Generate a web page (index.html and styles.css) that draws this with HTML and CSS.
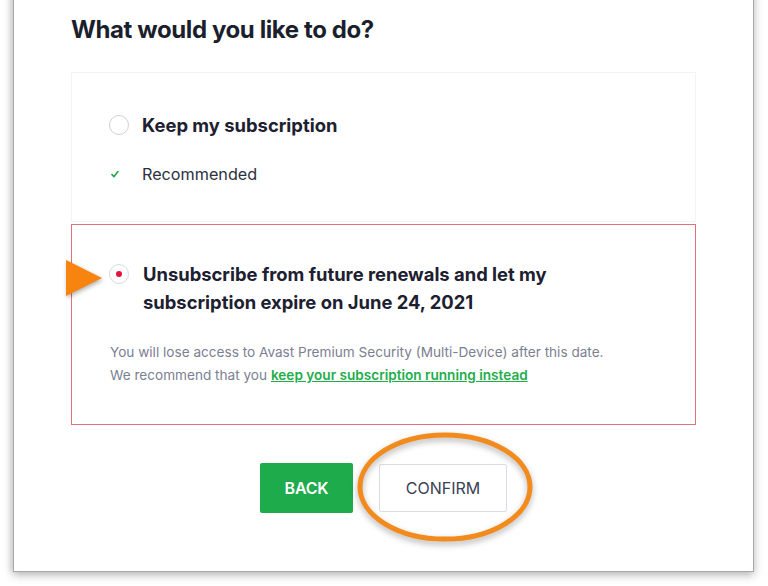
FILE: index.html
```html
<!DOCTYPE html>
<html lang="en">
<head>
<meta charset="utf-8">
<title>What would you like to do?</title>
<link rel="stylesheet" href="styles.css">
</head>
<body>
<div class="card">
  <h1 class="title">What would you like to do?</h1>

  <div class="option option-keep">
    <div class="option-row">
      <span class="radio"></span>
      <span class="option-label">Keep my subscription</span>
    </div>
    <div class="recommended">
      <svg class="check" width="8" height="8" viewBox="0 0 8 8"><path d="M1 4.6 L3 6.6 L7 1.6" fill="none" stroke="#1fa64a" stroke-width="1.6" stroke-linecap="round" stroke-linejoin="round"/></svg>
      <span>Recommended</span>
    </div>
  </div>

  <div class="option option-unsub">
    <div class="option-row top">
      <span class="radio checked"><span class="dot"></span></span>
      <span class="option-label">Unsubscribe from future renewals and let my<br>subscription expire on June 24, 2021</span>
    </div>
    <p class="note">You will lose access to Avast Premium Security (Multi-Device) after this date.<br>We recommend that you <a href="#" class="link">keep your subscription running instead</a></p>
  </div>

  <div class="actions">
    <button class="btn btn-back">BACK</button>
    <button class="btn btn-confirm">CONFIRM</button>
  </div>

  <svg class="pointer" width="40" height="40" viewBox="0 0 40 40"><polygon points="1,1 37,19 1,37" fill="#f7840f"/></svg>
  <svg class="ring" width="176" height="110" viewBox="0 0 176 110"><ellipse cx="88" cy="55" rx="85" ry="52" fill="none" stroke="#f28a1c" stroke-width="5"/></svg>
</div>
</body>
</html>
```

FILE: styles.css
```css
html, body {
  margin: 0;
  padding: 0;
  background: #ffffff;
}
body {
  font-family: "Inter", "Lato", sans-serif;
  color: #1c2030;
  width: 768px;
  height: 586px;
  overflow: hidden;
}
.card {
  position: relative;
  box-sizing: border-box;
  width: 741px;
  height: 582px;
  margin: -10px 0 0 13px;
  padding: 25px 0 0 57px;
  background: #fff;
  border: 1px solid #a8a8a8;
  box-shadow: 0 3px 9px rgba(0, 0, 0, 0.28), -3px 0 6px rgba(0,0,0,0.08);
}
.title {
  margin: 0;
  font-size: 24px;
  line-height: 28px;
  font-weight: 700;
  color: #1b1f2d;
  letter-spacing: -0.4px;
}
.option {
  box-sizing: border-box;
  width: 625px;
  background: #fff;
}
.option-keep {
  margin-top: 28px;
  height: 150px;
  border: 1px solid #f3f3f3;
  padding: 40px 0 0 37px;
}
.option-unsub {
  margin-top: 2px;
  height: 201px;
  border: 1px solid #e1707c;
  padding: 35px 0 0 37px;
}
.option-row {
  display: flex;
  align-items: center;
  gap: 13px;
}
.option-row.top {
  align-items: flex-start;
  gap: 14px;
}
.option-row.top .radio {
  margin-top: 4px;
}
.radio {
  box-sizing: border-box;
  flex: none;
  width: 20px;
  height: 20px;
  border-radius: 50%;
  border: 1.5px solid #cfd1d6;
  display: flex;
  align-items: center;
  justify-content: center;
}
.radio.checked {
  border-color: #d8dae0;
}
.dot {
  width: 6px;
  height: 6px;
  border-radius: 50%;
  background: #e3143a;
}
.option-label {
  font-size: 18.4px;
  line-height: 24px;
  font-weight: 700;
  color: #1c2030;
}
.option-row.top .option-label {
  line-height: 28px;
}
.recommended {
  display: flex;
  align-items: center;
  margin-top: 27px;
  font-size: 16.2px;
  line-height: 20px;
  color: #2c3040;
}
.check {
  margin: 0 23px 0 2px;
}
.note {
  margin: 25px 0 0 1px;
  font-size: 13.6px;
  line-height: 23px;
  color: #7b8091;
}
.link {
  color: #22ad4b;
  font-weight: 600;
  text-decoration: underline;
}
.actions {
  display: flex;
  align-items: center;
  justify-content: center;
  gap: 26px;
  width: 625px;
  margin-top: 38px;
}
.btn {
  font-family: "Inter", "Lato", sans-serif;
  font-size: 16px;
  border-radius: 2px;
  cursor: pointer;
}
.btn-back {
  width: 93px;
  height: 50px;
  background: #1dab4b;
  border: none;
  color: #fff;
  font-weight: 600;
  letter-spacing: -0.2px;
}
.btn-confirm {
  width: 128px;
  height: 48px;
  background: #fff;
  border: 1px solid #dadce3;
  color: #3a3f56;
  font-weight: 400;
}
.pointer {
  position: absolute;
  left: 51px;
  top: 268px;
  filter: drop-shadow(1px 2px 2px rgba(0,0,0,0.3));
}
.ring {
  position: absolute;
  left: 343px;
  top: 441px;
  filter: drop-shadow(0 3px 3px rgba(0,0,0,0.3));
}
```
